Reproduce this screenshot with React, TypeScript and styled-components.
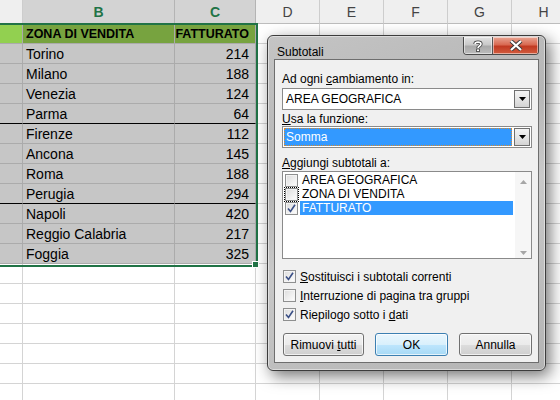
import React from "react";
import styled, { createGlobalStyle } from "styled-components";

const GlobalStyle = createGlobalStyle`
  html, body {
    margin: 0;
    padding: 0;
    background: #ffffff;
    overflow: hidden;
  }
  body {
    font-family: "Liberation Sans", Arial, sans-serif;
  }
`;

// column A is scrolled almost out of view, so its letter is hidden
const columns = ["", "B", "C", "D", "E", "F", "G", "H"];
const widths = [23, 152, 81, 64, 64, 64, 64, 64];

const data: [string, number][] = [
  ["Torino", 214],
  ["Milano", 188],
  ["Venezia", 124],
  ["Parma", 64],
  ["Firenze", 112],
  ["Ancona", 145],
  ["Roma", 188],
  ["Perugia", 294],
  ["Napoli", 420],
  ["Reggio Calabria", 217],
  ["Foggia", 325],
];

// rows whose bottom gets the black group line
const groupEnds = [3, 7];

const Page = styled.div`
  position: relative;
  width: 560px;
  height: 400px;
  overflow: hidden;
`;

const Sheet = styled.div`
  position: relative;
  display: grid;
  grid-template-columns: ${widths.map((w) => w + "px").join(" ")};
  grid-template-rows: 24px;
  grid-auto-rows: 20px;
  font-size: 14px;
  color: #000;
`;

const ColHead = styled.div<{ $sel?: boolean }>`
  box-sizing: border-box;
  display: flex;
  align-items: center;
  justify-content: center;
  background: ${(p) => (p.$sel ? "#d3d3d3" : "#efefef")};
  border-right: 1px solid ${(p) => (p.$sel ? "#b4b4b4" : "#cdcdcd")};
  border-bottom: 1px solid #bdbdbd;
  color: ${(p) => (p.$sel ? "#217346" : "#444444")};
  font-weight: ${(p) => (p.$sel ? "bold" : "normal")};
  font-size: 14px;
`;

const Cell = styled.div<{
  $bg?: string;
  $sel?: boolean;
  $right?: boolean;
  $bold?: boolean;
  $group?: boolean;
}>`
  box-sizing: border-box;
  display: flex;
  align-items: center;
  justify-content: ${(p) => (p.$right ? "flex-end" : "flex-start")};
  padding: 1px ${(p) => (p.$right ? "6px" : "3px")} 0 3px;
  background: ${(p) => p.$bg || (p.$sel ? "#c6c6c6" : "#ffffff")};
  border-right: 1px solid ${(p) => (p.$sel ? "#ababab" : "#d4d4d4")};
  border-bottom: 1px solid
    ${(p) => (p.$group ? "#000000" : p.$sel ? "#ababab" : "#d4d4d4")};
  font-weight: ${(p) => (p.$bold ? "bold" : "normal")};
  font-size: ${(p) => (p.$bold ? "12.5px" : "14px")};
  white-space: nowrap;
  overflow: hidden;
`;

const Selection = styled.div`
  position: absolute;
  left: -3px;
  top: 23px;
  width: 257px;
  height: 240px;
  border: 2px solid #217346;
  pointer-events: none;
`;

const FillHandle = styled.div`
  position: absolute;
  left: 252px;
  top: 261px;
  width: 5px;
  height: 5px;
  background: #217346;
  border: 1px solid #ffffff;
`;

/* ---------- dialog ---------- */

const Dialog = styled.div`
  position: absolute;
  left: 267px;
  top: 35px;
  width: 279px;
  height: 336px;
  box-sizing: border-box;
  display: flex;
  flex-direction: column;
  padding: 0 6px 8px 6px;
  border: 1px solid #3c3c3c;
  border-radius: 6px;
  background: linear-gradient(
    160deg,
    #c4c4c4 0%,
    #b6b6b6 35%,
    #c9c9c9 55%,
    #b3b3b3 100%
  );
  box-shadow: inset 0 0 0 1px rgba(255, 255, 255, 0.45),
    4px 5px 16px rgba(0, 0, 0, 0.55);
  font-family: "Liberation Sans", Arial, sans-serif;
  font-size: 12px;
  color: #000;
`;

const TitleBar = styled.div`
  height: 28px;
  display: flex;
  align-items: flex-start;
  justify-content: space-between;
`;

const Title = styled.div`
  margin-top: 9px;
  padding-left: 3px;
  font-size: 12px;
`;

const Caption = styled.div`
  display: flex;
  margin-top: 1px;
  border: 1px solid #4a4a4a;
  border-top: none;
  border-radius: 0 0 4px 4px;
  overflow: hidden;
`;

const CapBtn = styled.div<{ $close?: boolean }>`
  width: ${(p) => (p.$close ? "45px" : "28px")};
  height: 17px;
  display: flex;
  align-items: center;
  justify-content: center;
  background: ${(p) =>
    p.$close
      ? "linear-gradient(180deg, #e8a593 0%, #d96a52 45%, #c13a22 55%, #d25c3e 100%)"
      : "linear-gradient(180deg, #e2e2e2 0%, #c9c9c9 45%, #a9a9a9 55%, #bcbcbc 100%)"};
  border-left: ${(p) => (p.$close ? "1px solid #555" : "none")};
  box-shadow: inset 0 0 0 1px rgba(255, 255, 255, 0.5);
`;

const Client = styled.div`
  flex: 1;
  box-sizing: border-box;
  display: flex;
  flex-direction: column;
  padding: 12px 6px 6px 7px;
  background: #f0f0f0;
  border: 1px solid #6e6e6e;
`;

const Label = styled.div<{ $gap?: number; $mb?: number }>`
  height: 14px;
  line-height: 14px;
  margin-top: ${(p) => p.$gap || 0}px;
  margin-bottom: ${(p) => p.$mb ?? 2}px;
  white-space: nowrap;
`;

const Combo = styled.div`
  height: 22px;
  box-sizing: border-box;
  display: flex;
  align-items: stretch;
  background: #ffffff;
  border: 1px solid #8a8a8a;
  padding: 1px;
`;

const ComboText = styled.div<{ $focus?: boolean }>`
  flex: 1;
  display: flex;
  align-items: center;
  padding-left: 2px;
  margin-right: 2px;
  background: ${(p) => (p.$focus ? "#3399ff" : "transparent")};
  color: ${(p) => (p.$focus ? "#ffffff" : "#000000")};
  outline: ${(p) => (p.$focus ? "1px dotted #d98a2c" : "none")};
  outline-offset: -1px;
`;

const DropBtn = styled.div`
  width: 16px;
  display: flex;
  align-items: center;
  justify-content: center;
  box-sizing: border-box;
  border: 1px solid #707070;
  background: linear-gradient(180deg, #f4f4f4 0%, #e6e6e6 50%, #d4d4d4 100%);
`;

const ListBox = styled.div`
  height: 88px;
  box-sizing: border-box;
  display: flex;
  background: #ffffff;
  border: 1px solid #8a8a8a;
`;

const ListItems = styled.div`
  flex: 1;
  display: flex;
  flex-direction: column;
  padding: 1px 2px 0 2px;
`;

const ListItem = styled.div`
  height: 14px;
  display: flex;
  align-items: center;
  gap: 2px;
`;

const ItemText = styled.span<{ $sel?: boolean }>`
  flex: 1;
  height: 14px;
  line-height: 14px;
  padding-left: 2px;
  background: ${(p) => (p.$sel ? "#3399ff" : "transparent")};
  color: ${(p) => (p.$sel ? "#ffffff" : "#000000")};
`;

const ScrollBar = styled.div`
  width: 16px;
  display: flex;
  flex-direction: column;
  justify-content: space-between;
  align-items: center;
  padding: 8px 0 3px;
  background: #f6f6f6;
`;

const Box = styled.div<{ $focus?: boolean }>`
  width: 13px;
  height: 13px;
  flex: none;
  box-sizing: border-box;
  display: flex;
  align-items: center;
  justify-content: center;
  border: 1px solid #8e8f8f;
  background: linear-gradient(135deg, #dcdcdc 0%, #f4f4f4 70%, #ffffff 100%);
  box-shadow: inset 0 0 0 1px #f4f4f4;
  outline: ${(p) => (p.$focus ? "1px dotted #000" : "none")};
  outline-offset: 0px;
`;

const Options = styled.div`
  display: flex;
  flex-direction: column;
  margin-top: 8px;
`;

const Option = styled.div`
  height: 19px;
  display: flex;
  align-items: center;
  gap: 4px;
  padding-left: 1px;
  white-space: nowrap;
`;

const ButtonRow = styled.div`
  display: flex;
  gap: 11px;
  margin-top: 9px;
  padding-left: 1px;
`;

const Button = styled.div<{ $w: number; $default?: boolean }>`
  width: ${(p) => p.$w}px;
  height: 23px;
  box-sizing: border-box;
  display: flex;
  align-items: center;
  justify-content: center;
  border: 1px solid ${(p) => (p.$default ? "#3c7fb1" : "#707070")};
  border-radius: 3px;
  background: ${(p) =>
    p.$default
      ? "linear-gradient(180deg, #eaf6fd 0%, #d9f0fc 50%, #bee6fd 51%, #a7d9f5 100%)"
      : "linear-gradient(180deg, #f2f2f2 0%, #ebebeb 50%, #dddddd 51%, #cfcfcf 100%)"};
  box-shadow: inset 0 0 0 1px rgba(255, 255, 255, 0.7);
`;

const Check = () => (
  <svg width="9" height="9" viewBox="0 0 9 9">
    <path
      d="M1 4.5 L3.5 7.5 L8 0.8"
      fill="none"
      stroke="#3a4f86"
      strokeWidth="1.6"
    />
  </svg>
);

const Arrow = ({ up, color }: { up?: boolean; color: string }) => (
  <svg width="7" height="4" viewBox="0 0 7 4">
    <path d={up ? "M0 4 L3.5 0 L7 4 Z" : "M0 0 L7 0 L3.5 4 Z"} fill={color} />
  </svg>
);

const DialogBox = () => (
  <Dialog>
    <TitleBar>
      <Title>Subtotali</Title>
      <Caption>
        <CapBtn>
          <svg width="10" height="12" viewBox="0 0 10 12">
            <path
              d="M2 4 C2 1.5 8 1.5 8 4 C8 6 5 6 5 8"
              fill="none"
              stroke="#3a3a3a"
              strokeWidth="3.2"
            />
            <path
              d="M2 4 C2 1.5 8 1.5 8 4 C8 6 5 6 5 8"
              fill="none"
              stroke="#ffffff"
              strokeWidth="1.6"
            />
            <rect x="3.6" y="9" width="2.8" height="2.6" fill="#ffffff" stroke="#3a3a3a" strokeWidth="0.8" />
          </svg>
        </CapBtn>
        <CapBtn $close>
          <svg width="14" height="11" viewBox="0 0 14 11">
            <path d="M2 1 L12 10 M12 1 L2 10" stroke="#3a3a3a" strokeWidth="4" />
            <path d="M2 1 L12 10 M12 1 L2 10" stroke="#ffffff" strokeWidth="2.2" />
          </svg>
        </CapBtn>
      </Caption>
    </TitleBar>
    <Client>
      <Label>
        Ad ogni <u>c</u>ambiamento in:
      </Label>
      <Combo>
        <ComboText>AREA GEOGRAFICA</ComboText>
        <DropBtn>
          <Arrow color="#000" />
        </DropBtn>
      </Combo>
      <Label $gap={2} $mb={0}>
        <u>U</u>sa la funzione:
      </Label>
      <Combo>
        <ComboText $focus>Somma</ComboText>
        <DropBtn>
          <Arrow color="#000" />
        </DropBtn>
      </Combo>
      <Label $gap={8} $mb={1}>
        <u>A</u>ggiungi subtotali a:
      </Label>
      <ListBox>
        <ListItems>
          <ListItem>
            <Box />
            <ItemText>AREA GEOGRAFICA</ItemText>
          </ListItem>
          <ListItem>
            <Box $focus />
            <ItemText>ZONA DI VENDITA</ItemText>
          </ListItem>
          <ListItem>
            <Box>
              <Check />
            </Box>
            <ItemText $sel>FATTURATO</ItemText>
          </ListItem>
        </ListItems>
        <ScrollBar>
          <Arrow up color="#a6a6a6" />
          <Arrow color="#a6a6a6" />
        </ScrollBar>
      </ListBox>
      <Options>
        <Option>
          <Box>
            <Check />
          </Box>
          <span>
            <u>S</u>ostituisci i subtotali correnti
          </span>
        </Option>
        <Option>
          <Box />
          <span>
            <u>I</u>nterruzione di pagina tra gruppi
          </span>
        </Option>
        <Option>
          <Box>
            <Check />
          </Box>
          <span>
            Riepilogo sotto i <u>d</u>ati
          </span>
        </Option>
      </Options>
      <ButtonRow>
        <Button $w={81}>
          <span>
            Rimuovi <u>t</u>utti
          </span>
        </Button>
        <Button $w={73} $default>
          OK
        </Button>
        <Button $w={73}>Annulla</Button>
      </ButtonRow>
    </Client>
  </Dialog>
);

const emptyRows = 7;

export default function App() {
  return (
    <Page>
      <GlobalStyle />
      <Sheet>
        {columns.map((c, i) => (
          <ColHead key={"c" + i} $sel={i === 1 || i === 2}>
            {c}
          </ColHead>
        ))}

        {/* header row of the table */}
        <Cell $bg="#92d050" $sel />
        <Cell $bg="#77a33f" $sel $bold>
          ZONA DI VENDITA
        </Cell>
        <Cell $bg="#77a33f" $sel $bold $right>
          FATTURATO
        </Cell>
        {columns.slice(3).map((c) => (
          <Cell key={"h" + c} />
        ))}

        {data.map(([city, value], r) => {
          const group = groupEnds.includes(r);
          return (
            <React.Fragment key={city}>
              <Cell $sel $group={group} />
              <Cell $sel $group={group}>
                {city}
              </Cell>
              <Cell $sel $group={group} $right>
                {value}
              </Cell>
              {columns.slice(3).map((c) => (
                <Cell key={city + c} />
              ))}
            </React.Fragment>
          );
        })}

        {Array.from({ length: emptyRows }).map((_, r) =>
          columns.map((c, i) => <Cell key={"e" + r + "-" + i} />)
        )}

        <Selection />
        <FillHandle />
      </Sheet>
      <DialogBox />
    </Page>
  );
}
